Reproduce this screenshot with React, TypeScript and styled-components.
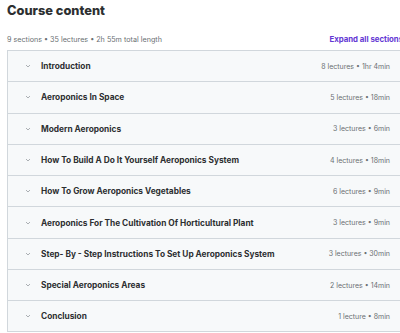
import React from 'react';
import styled, { createGlobalStyle } from 'styled-components';

const GlobalStyle = createGlobalStyle`
    body {
        margin: 0;
        background: #ffffff;
        font-family: Inter, "Liberation Sans", sans-serif;
        overflow: hidden;
    }
`;

const Page = styled.div`
    width: 396px;
    padding: 0 0 0 7px;
`;

const Title = styled.h2`
    margin: 0;
    padding-top: 2px;
    font-size: 12.8px;
    font-weight: 800;
    color: #2d2f31;
    line-height: 18px;
`;

const SummaryBar = styled.div`
    display: flex;
    align-items: center;
    justify-content: space-between;
    margin-top: 12px;
    height: 14px;
    margin-bottom: 4px;
`;

const Summary = styled.span`
    font-size: 7.2px;
    color: #6a6f73;
`;

const ExpandButton = styled.button`
    border: none;
    background: none;
    padding: 0;
    font-family: inherit;
    font-size: 7.8px;
    font-weight: 700;
    color: #6236d3;
    white-space: nowrap;
    cursor: pointer;
`;

const SectionList = styled.div`
    border-left: 1px solid #d1d7dc;
    border-right: 1px solid #d1d7dc;
`;

const SectionRow = styled.div`
    display: flex;
    align-items: center;
    height: 31.3px;
    box-sizing: border-box;
    padding: 0 12px 0 17px;
    background: #f7f9fa;
    border-top: 1px solid #d1d7dc;
    border-bottom: ${({ $last }: { $last?: boolean }) => ($last ? '1px solid #d1d7dc' : 'none')};
`;

const Chevron = styled.svg`
    width: 6px;
    height: 4px;
    flex: none;
    margin-right: 10px;
`;

const SectionTitle = styled.span`
    flex: 1;
    font-size: 8.3px;
    font-weight: 700;
    color: #2d2f31;
    white-space: nowrap;
`;

const SectionMeta = styled.span`
    font-size: 7px;
    color: #6a6f73;
    white-space: nowrap;
`;

const sections = [
    { title: 'Introduction', meta: '8 lectures • 1hr 4min' },
    { title: 'Aeroponics In Space', meta: '5 lectures • 18min' },
    { title: 'Modern Aeroponics', meta: '3 lectures • 6min' },
    { title: 'How To Build A Do It Yourself Aeroponics System', meta: '4 lectures • 18min' },
    { title: 'How To Grow Aeroponics Vegetables', meta: '6 lectures • 9min' },
    { title: 'Aeroponics For The Cultivation Of Horticultural Plant', meta: '3 lectures • 9min' },
    { title: 'Step- By - Step Instructions To Set Up Aeroponics System', meta: '3 lectures • 30min' },
    { title: 'Special Aeroponics Areas', meta: '2 lectures • 14min' },
    { title: 'Conclusion', meta: '1 lecture • 8min' },
];

export default function App() {
    return (
        <>
            <GlobalStyle />
            <Page>
                <Title>Course content</Title>
                <SummaryBar>
                    <Summary>9 sections • 35 lectures • 2h 55m total length</Summary>
                    <ExpandButton>Expand all sections</ExpandButton>
                </SummaryBar>
                <SectionList>
                    {sections.map((s, i) => (
                        <SectionRow key={s.title} $last={i === sections.length - 1}>
                            <Chevron viewBox="0 0 6 4">
                                <path d="M1 1 L3 3 L5 1" fill="none" stroke="#8a8f93" strokeWidth="0.7" />
                            </Chevron>
                            <SectionTitle>{s.title}</SectionTitle>
                            <SectionMeta>{s.meta}</SectionMeta>
                        </SectionRow>
                    ))}
                </SectionList>
            </Page>
        </>
    );
}
